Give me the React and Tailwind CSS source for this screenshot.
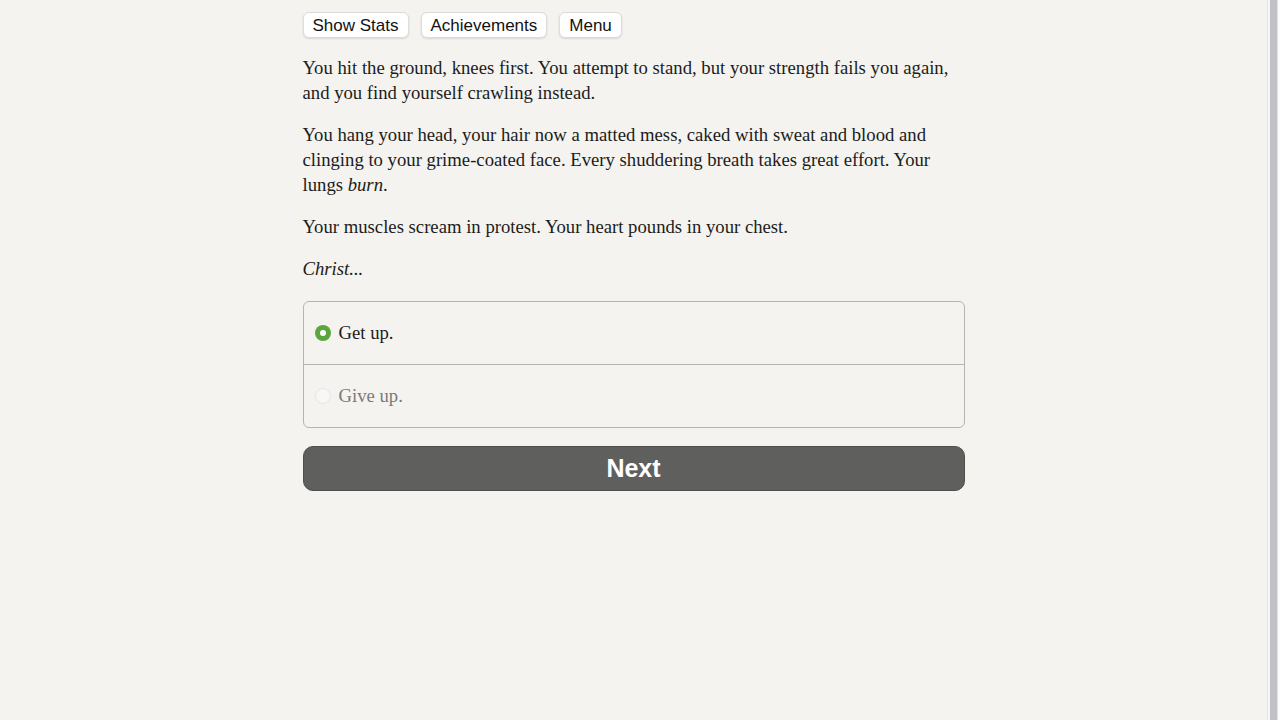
import React from "react";

const serif = { fontFamily: '"Liberation Serif", "Times New Roman", serif' };
const sans = { fontFamily: '"Liberation Sans", Arial, sans-serif' };

export default function App() {
  return (
    <div className="flex min-h-[720px] w-full bg-[#f4f3ef]">
      <div className="flex min-w-0 flex-1 justify-center">
        <div className="w-[662px] pt-[12px]">
          <div className="flex gap-[12px]" style={sans}>
            <button className="h-[26px] rounded-[6px] border border-[#dcdcdc] bg-white px-[9px] text-[17px] leading-none text-[#111] shadow-[0_1px_2px_rgba(0,0,0,0.12)]">Show Stats</button>
            <button className="h-[26px] rounded-[6px] border border-[#dcdcdc] bg-white px-[9px] text-[17px] leading-none text-[#111] shadow-[0_1px_2px_rgba(0,0,0,0.12)]">Achievements</button>
            <button className="h-[26px] rounded-[6px] border border-[#dcdcdc] bg-white px-[9px] text-[17px] leading-none text-[#111] shadow-[0_1px_2px_rgba(0,0,0,0.12)]">Menu</button>
          </div>
          <div className="mt-[17px] text-[18.7px] leading-[25px] text-[#1c1c1c]" style={serif}>
            <p>You hit the ground, knees first. You attempt to stand, but your strength fails you again, and you find yourself crawling instead.</p>
            <p className="mt-[17px]">You hang your head, your hair now a matted mess, caked with sweat and blood and clinging to your grime-coated face. Every shuddering breath takes great effort. Your lungs <i>burn</i>.</p>
            <p className="mt-[17px]">Your muscles scream in protest. Your heart pounds in your chest.</p>
            <p className="mt-[17px]"><i>Christ...</i></p>
          </div>
          <div className="mt-[20px] rounded-[6px] border border-[#b4b4b4] text-[18.7px]" style={serif}>
            <div className="flex h-[63px] items-center gap-[8px] border-b border-[#b4b4b4] px-[11px]">
              <span className="flex h-[16px] w-[16px] items-center justify-center rounded-full bg-[#5aa63f]">
                <span className="h-[6px] w-[6px] rounded-full bg-white" />
              </span>
              <span className="text-[#1c1c1c]">Get up.</span>
            </div>
            <div className="flex h-[62px] items-center gap-[8px] px-[11px]">
              <span className="h-[16px] w-[16px] rounded-full border border-[#e6e6e6] bg-[#f7f7f5]" />
              <span className="text-[#7a7a7a]">Give up.</span>
            </div>
          </div>
          <button className="mt-[18px] flex h-[45px] w-full items-center justify-center rounded-[10px] border border-[#4e4e4e] bg-[#5f5f5e] text-[25px] font-bold text-white" style={sans}>Next</button>
        </div>
      </div>
      <div className="flex w-[13px] shrink-0">
        <div className="w-[1px] bg-[#e4e6e0]" />
        <div className="w-[2px] bg-[#f6f6f6]" />
        <div className="w-[7px] bg-[#c1c1c5]" />
        <div className="w-[1px] bg-[#e2e2e4]" />
        <div className="w-[2px] bg-[#fbfbfb]" />
      </div>
    </div>
  );
}
